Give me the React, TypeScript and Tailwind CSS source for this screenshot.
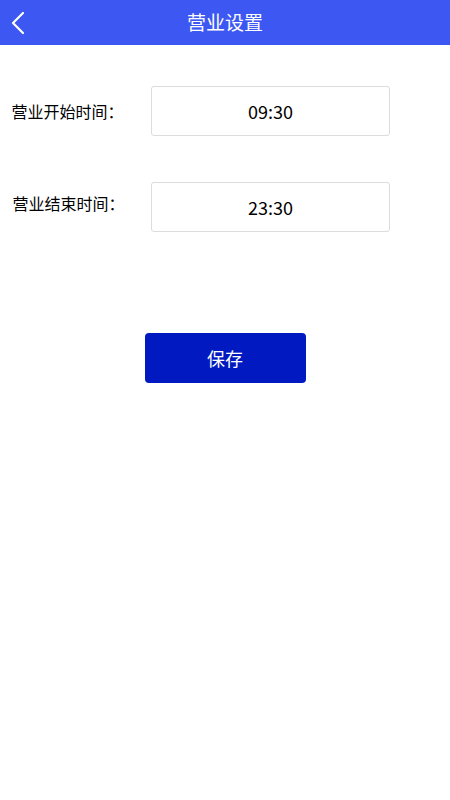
import React, { useState } from "react";

const font = { fontFamily: '"Noto Sans CJK SC", "Noto Sans", sans-serif' };

type TimeRowProps = {
  label: string;
  value: string;
  onChange: (v: string) => void;
  labelClass?: string;
};

const TimeRow: React.FC<TimeRowProps> = ({ label, value, onChange, labelClass }) => (
  <div className="flex items-center">
    <div className={"w-[135px] text-center text-[16px] text-black " + (labelClass ?? "")}>{label}</div>
    <input
      className="ml-[16px] h-[50px] w-[239px] rounded-[3px] border border-[#dcdcdc] bg-white text-center text-[18px] text-black outline-none"
      value={value}
      onChange={(e) => onChange(e.target.value)}
    />
  </div>
);

export default function App() {
  const [start, setStart] = useState("09:30");
  const [end, setEnd] = useState("23:30");

  return (
    <div className="min-h-[800px] w-full bg-white" style={font}>
      <div className="relative flex h-[45px] items-center justify-center bg-[#3d57f3]">
        <button className="absolute left-[10px] top-[11px] text-white">
          <svg width="16" height="24" viewBox="0 0 16 24" fill="none">
            <path d="M13 2 L3 12 L13 22" stroke="white" strokeWidth="2.2" strokeLinecap="round" strokeLinejoin="round" />
          </svg>
        </button>
        <h1 className="text-[19px] text-white">营业设置</h1>
      </div>

      <div className="flex flex-col gap-[46px] pt-[41px]">
        <TimeRow label="营业开始时间：" value={start} onChange={setStart} />
        <TimeRow label="营业结束时间：" value={end} onChange={setEnd} labelClass="mb-[8px] pl-[2px]" />
      </div>

      <div className="mt-[101px] flex justify-center">
        <button className="h-[50px] w-[161px] rounded-[4px] bg-[#0019c1] text-[18px] text-white">
          保存
        </button>
      </div>
    </div>
  );
}
